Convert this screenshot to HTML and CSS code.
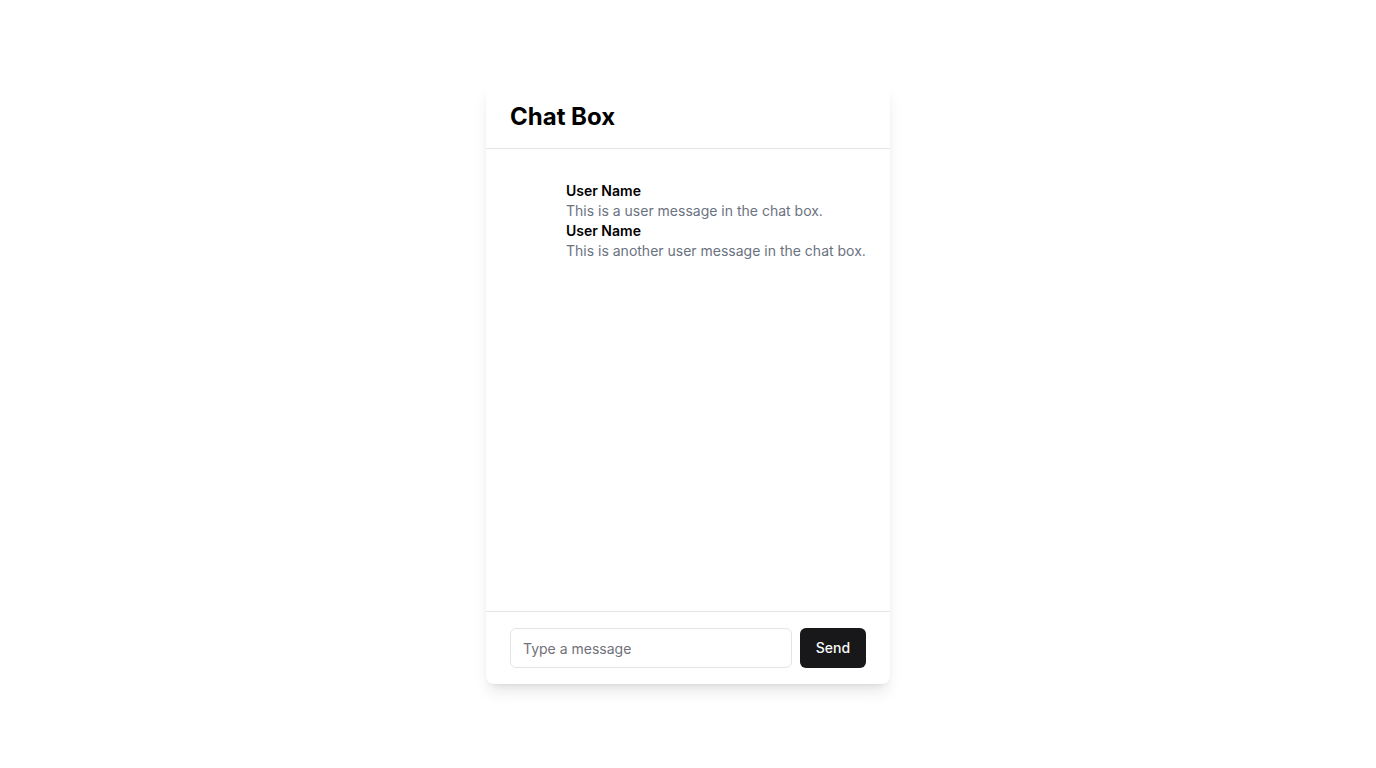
FILE: index.html
```html
<!DOCTYPE html>
<html lang="en">
<head>
    <meta charset="UTF-8">
    <meta name="viewport" content="width=device-width, initial-scale=1.0">
    <title>Chat Box</title>
    <link rel="stylesheet" href="styles.css">
</head>
<body>
    <div class="chat-card">
        <!-- Header -->
        <div class="chat-header">
            <h2>Chat Box</h2>
        </div>

        <!-- Messages -->
        <div class="chat-messages">
            <div class="message">
                <div class="avatar"></div>
                <div class="message-body">
                    <div class="sender">User Name</div>
                    <div class="text">This is a user message in the chat box.</div>
                    <div class="sender">User Name</div>
                    <div class="text">This is another user message in the chat box.</div>
                </div>
            </div>
        </div>

        <!-- Input row -->
        <div class="chat-footer">
            <input type="text" class="chat-input" placeholder="Type a message">
            <button class="send-btn">Send</button>
        </div>
    </div>
</body>
</html>
```

FILE: styles.css
```css
* {
    box-sizing: border-box;
    margin: 0;
    padding: 0;
}

body {
    font-family: "Inter", "Liberation Sans", sans-serif;
    background-color: #ffffff;
    color: #09090b;
    display: flex;
    justify-content: center;
    padding-top: 84px;
    height: 100vh;
}

.chat-card {
    width: 404px;
    height: 600px;
    display: flex;
    flex-direction: column;
    background-color: #fff;
    border-radius: 8px;
    box-shadow: 0 10px 15px -3px rgba(0, 0, 0, 0.1), 0 4px 6px -4px rgba(0, 0, 0, 0.1);
}

.chat-header {
    padding: 17px 24px 15px;
    border-bottom: 1px solid #e4e4e7;
}

.chat-header h2 {
    font-size: 24px;
    line-height: 32px;
    font-weight: 700;
    color: #000;
}

.chat-messages {
    flex: 1;
    padding: 32px 24px 24px;
    overflow-y: auto;
}

.message {
    display: flex;
    gap: 16px;
}

.avatar {
    width: 40px;
    height: 40px;
    flex-shrink: 0;
}

.sender {
    font-size: 14px;
    line-height: 20px;
    font-weight: 600;
    color: #000;
}

.text {
    font-size: 14px;
    line-height: 20px;
    color: #6b7280;
}

.chat-footer {
    display: flex;
    gap: 8px;
    padding: 16px 24px;
    border-top: 1px solid #e4e4e7;
}

.chat-input {
    flex: 1;
    height: 40px;
    padding: 0 12px;
    font-family: inherit;
    font-size: 14px;
    border: 1px solid #e4e4e7;
    border-radius: 6px;
    outline: none;
    color: #09090b;
}

.chat-input::placeholder {
    color: #71717a;
}

.send-btn {
    width: 66px;
    height: 40px;
    padding-bottom: 2px;
    font-family: inherit;
    font-size: 14px;
    font-weight: 500;
    color: #fafafa;
    background-color: #18181b;
    border: none;
    border-radius: 6px;
}
```
